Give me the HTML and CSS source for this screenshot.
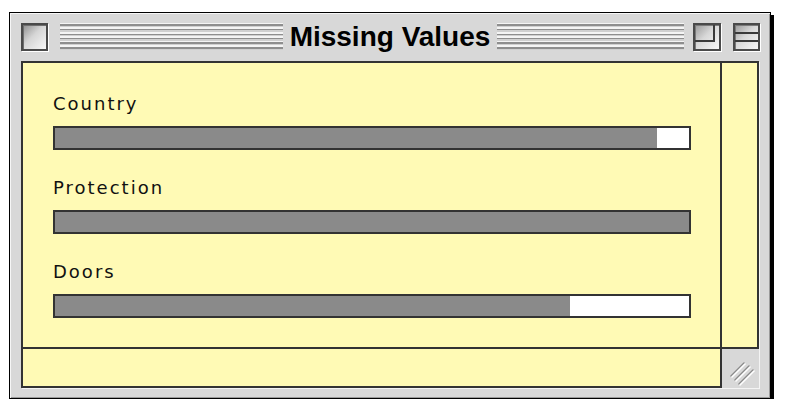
FILE: index.html
```html
<!DOCTYPE html>
<html>
<head>
<meta charset="utf-8">
<link rel="stylesheet" href="styles.css">
</head>
<body>
<div class="window">
  <div class="titlebar">
    <div class="tb-left">
      <span class="closebox"></span>
      <span class="stripes"></span>
    </div>
    <div class="title">Missing Values</div>
    <div class="tb-right">
      <span class="stripes"></span>
      <span class="btn zoombox">
        <svg width="24" height="24" viewBox="0 0 24 24"><path d="M19 0 V16 H0" fill="none" stroke="#3a3a3a" stroke-width="2"/></svg>
      </span>
      <span class="btn collapsebox">
        <svg width="23" height="24" viewBox="0 0 23 24"><path d="M0 8 H23 M0 16 H23" fill="none" stroke="#3a3a3a" stroke-width="2"/></svg>
      </span>
    </div>
  </div>
  <div class="content">
    <div class="pane">
      <div class="field">
        <div class="label">Country</div>
        <div class="bar"><div class="fill" style="width:94.95%"></div></div>
      </div>
      <div class="field">
        <div class="label">Protection</div>
        <div class="bar"><div class="fill" style="width:100%"></div></div>
      </div>
      <div class="field">
        <div class="label">Doors</div>
        <div class="bar"><div class="fill" style="width:81.2%"></div></div>
      </div>
    </div>
    <div class="vscroll"></div>
    <div class="hscroll"></div>
    <div class="grow">
      <svg width="37" height="39" viewBox="0 0 37 39">
        <g stroke-width="1.6" stroke-linecap="round">
          <path d="M9 27 L22 14" stroke="#8c8c8c"/>
          <path d="M10 28 L23 15" stroke="#ffffff"/>
          <path d="M13 31 L27 17" stroke="#8c8c8c"/>
          <path d="M14 32 L28 18" stroke="#ffffff"/>
          <path d="M17 35 L31 21" stroke="#8c8c8c"/>
          <path d="M18 36 L32 22" stroke="#ffffff"/>
        </g>
      </svg>
    </div>
  </div>
</div>
</body>
</html>
```

FILE: styles.css
```css
body {
  margin: 0;
  background: #ffffff;
}

.window {
  box-sizing: border-box;
  width: 762px;
  height: 387px;
  margin: 12px 0 0 9px;
  border: 1px solid #000;
  background: #d8d8d8;
  box-shadow: 3px 3px 0 #000, inset 1px 1px 0 #f6f6f6, inset -1px -1px 0 #9a9a9a;
  padding: 0 11px 10px;
  display: flex;
  flex-direction: column;
}

.titlebar {
  height: 48px;
  display: grid;
  grid-template-columns: 1fr auto 1fr;
  align-items: center;
}

.tb-left,
.tb-right {
  display: flex;
  align-items: center;
  height: 28px;
  margin-top: -1px;
}

.closebox {
  box-sizing: border-box;
  width: 27px;
  height: 28px;
  border: 2px solid #4a4a4a;
  background: linear-gradient(135deg, #8e8e8e 0%, #d6d6d6 45%, #f8f8f8 100%);
  box-shadow: 1px 1px 0 #ffffff, inset 1px 1px 0 #6e6e6e;
  margin-right: 12px;
  flex: none;
}

.stripes {
  flex: 1;
  height: 27px;
  background: repeating-linear-gradient(to bottom, #f4f4f4 0, #f4f4f4 1.5px, #8e8e8e 1.5px, #8e8e8e 3px, #d0d0d0 3px, #d0d0d0 4.5px);
}

.tb-right .stripes {
  margin-right: 9px;
}

.title {
  font-family: "Liberation Sans", Arial, sans-serif;
  font-weight: bold;
  font-size: 28px;
  line-height: 48px;
  color: #000;
  padding: 0 7px;
  white-space: nowrap;
}

.btn {
  box-sizing: border-box;
  height: 28px;
  border: 2px solid #4a4a4a;
  background: linear-gradient(135deg, #9a9a9a 0%, #d8d8d8 45%, #f8f8f8 100%);
  box-shadow: 1px 1px 0 #ffffff, inset 1px 1px 0 #7a7a7a;
  flex: none;
  display: block;
}

.btn svg {
  display: block;
}

.zoombox {
  width: 28px;
  margin-right: 12px;
}

.collapsebox {
  width: 27px;
  margin-right: -1px;
}

.content {
  height: 327px;
  display: grid;
  grid-template-columns: 699px 37px;
  grid-template-rows: 286px 39px;
  gap: 2px;
  background: #333333;
  box-shadow: 1px 1px 0 #f4f4f4;
}

.pane {
  background: #fffab5;
  border-top: 2px solid #333;
  border-left: 2px solid #333;
  padding: 31px 0 0 30px;
}

.field {
  margin-bottom: 28px;
}

.label {
  font-family: "DejaVu Sans", Verdana, sans-serif;
  font-size: 18px;
  line-height: 20px;
  letter-spacing: 2px;
  color: #111;
  margin-bottom: 12px;
}

.bar {
  box-sizing: border-box;
  width: 638px;
  height: 24px;
  border: 2px solid #333;
  background: #ffffff;
}

.fill {
  height: 100%;
  background: #8a8a8a;
}

.vscroll {
  background: #fffab5;
  border-top: 2px solid #333;
  border-right: 2px solid #333;
}

.hscroll {
  background: #fffab5;
  border-left: 2px solid #333;
  border-bottom: 2px solid #333;
}

.grow {
  background: #d8d8d8;
}

.grow svg {
  display: block;
}
```
